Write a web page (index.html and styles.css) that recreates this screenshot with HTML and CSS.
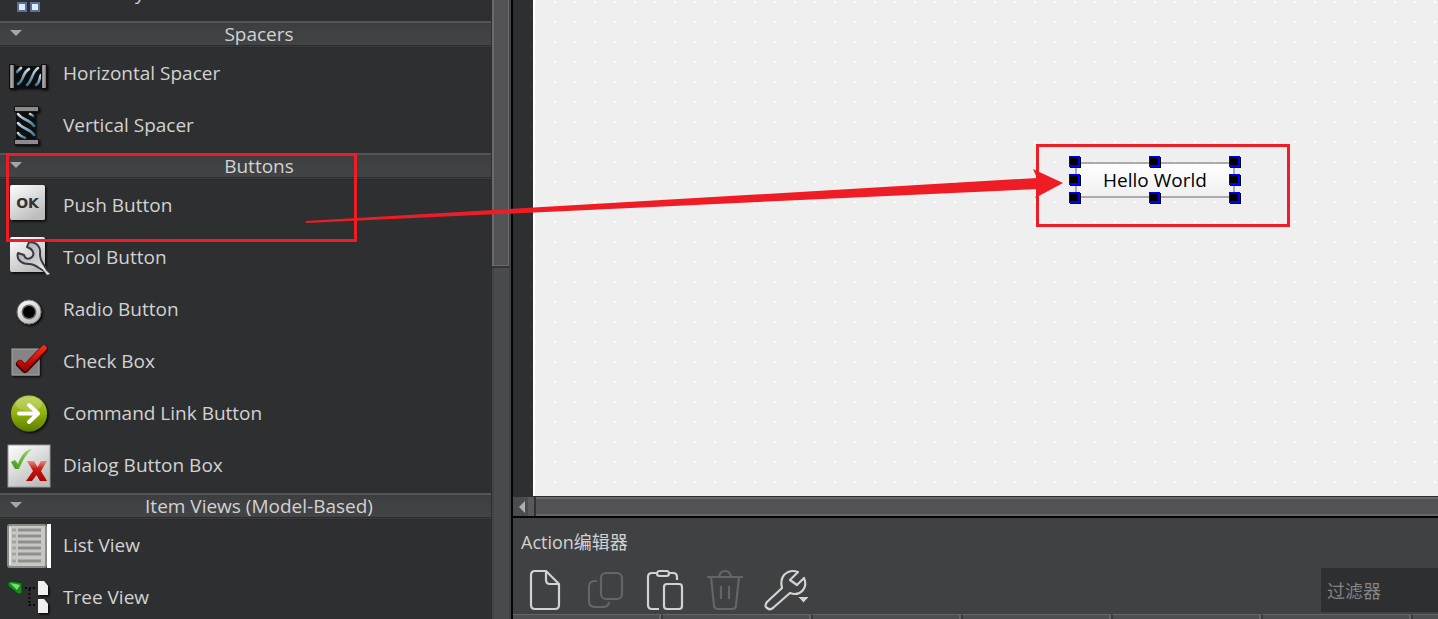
FILE: index.html
```html
<!DOCTYPE html>
<html lang="zh-CN">
<head>
  <meta charset="UTF-8">
  <meta name="viewport" content="width=device-width, initial-scale=1.0">
  <title>Designer</title>
  <link rel="stylesheet" href="styles.css">
</head>
<body>

  <svg class="defs" width="0" height="0" aria-hidden="true">
    <defs>
      <linearGradient id="face" x1="0" y1="0" x2="0.6" y2="1">
        <stop offset="0" stop-color="#fff"/><stop offset="1" stop-color="#bdbdbd"/>
      </linearGradient>
      <linearGradient id="metal" x1="0" y1="0" x2="1" y2="0">
        <stop offset="0" stop-color="#666"/><stop offset="0.4" stop-color="#aaa"/><stop offset="1" stop-color="#666"/>
      </linearGradient>
      <linearGradient id="coil" x1="0" y1="0" x2="0" y2="1">
        <stop offset="0" stop-color="#cbdde8"/><stop offset="1" stop-color="#3b7594"/>
      </linearGradient>
      <linearGradient id="wrench" x1="0" y1="0" x2="1" y2="1">
        <stop offset="0" stop-color="#a5a5ad"/><stop offset="1" stop-color="#e8e8f0"/>
      </linearGradient>
      <linearGradient id="green" x1="0" y1="0" x2="0" y2="1">
        <stop offset="0" stop-color="#b6cc48"/><stop offset="0.5" stop-color="#8db108"/><stop offset="1" stop-color="#5e7d00"/>
      </linearGradient>
      <linearGradient id="leaf" x1="0" y1="1" x2="1" y2="0">
        <stop offset="0" stop-color="#3d9a18"/><stop offset="1" stop-color="#8fe05a"/>
      </linearGradient>
      <linearGradient id="red" x1="0" y1="0" x2="0" y2="1">
        <stop offset="0" stop-color="#ee2a20"/><stop offset="1" stop-color="#a80000"/>
      </linearGradient>
      <linearGradient id="cross" x1="0" y1="0" x2="0" y2="1">
        <stop offset="0" stop-color="#e88a80"/><stop offset="0.4" stop-color="#c41a14"/><stop offset="1" stop-color="#b00000"/>
      </linearGradient>
      <filter id="shadow" x="-30%" y="-30%" width="170%" height="170%">
        <feDropShadow dx="1.5" dy="1.5" stdDeviation="1.3" flood-color="#000" flood-opacity="0.85"/>
      </filter>
    </defs>
  </svg>

  <aside class="widget-box">
    <div class="widget-list">
      <ul>
        <li>
          <svg class="icon" viewBox="0 0 44 44"><g fill="#dcecfa" stroke="#5b6f9b" stroke-width="2"><rect x="11" y="15" width="8" height="8"/><rect x="24" y="15" width="8" height="8"/><rect x="11" y="31" width="8" height="8"/><rect x="24" y="31" width="8" height="8"/></g></svg>
          Form Layout
        </li>
      </ul>

      <button class="group" type="button">Spacers</button>
      <ul>
        <li>
          <svg class="icon" viewBox="0 0 44 44">
            <g filter="url(#shadow)">
              <rect x="7" y="14" width="28" height="22" fill="#0b0d0f"/>
              <g stroke="url(#coil)" stroke-width="2.6" fill="none" stroke-linecap="round"><path d="M10 20l4-4"/><path d="M11 32C17 29 15 21 22 17"/><path d="M20 33C25 29 25 20 31 16"/><path d="M29 33C33 31 32 26 34 23"/></g>
              <rect x="2.5" y="12.5" width="5" height="24" fill="url(#metal)" stroke="#111"/>
              <rect x="34.5" y="12.5" width="5" height="24" fill="url(#metal)" stroke="#111"/>
            </g>
          </svg>
          Horizontal Spacer
        </li>
        <li>
          <svg class="icon" viewBox="0 0 44 44">
            <g filter="url(#shadow)">
              <rect x="9" y="7" width="19" height="30" fill="#0b0d0f"/>
              <g stroke="url(#coil)" stroke-width="2.6" fill="none" stroke-linecap="round"><path d="M23 10l3 2"/><path d="M11 10C15 16 22 15 27 22"/><path d="M11 19C15 25 22 24 27 31"/><path d="M11 29C13 33 15 32 18 34"/></g>
              <rect x="7.5" y="2.5" width="24" height="5" fill="#8c8c8c" stroke="#181818"/>
              <rect x="7.5" y="35.5" width="24" height="5" fill="#8c8c8c" stroke="#181818"/>
            </g>
          </svg>
          Vertical Spacer
        </li>
      </ul>

      <button class="group" type="button">Buttons</button>
      <ul>
        <li>
          <svg class="icon" viewBox="0 0 44 44">
            <rect x="3" y="1" width="35" height="35" rx="2" fill="url(#face)" filter="url(#shadow)"/>
            <text x="20.5" y="24" text-anchor="middle" class="ok">OK</text>
          </svg>
          Push Button
        </li>
        <li>
          <svg class="icon" viewBox="0 0 44 44">
            <rect x="3" y="1" width="35" height="35" rx="2" fill="url(#face)" filter="url(#shadow)"/>
            <path d="M20 11L22 6C30 6 34 11 33 18C33 22 34 25 37 29L42 38L32 32C28 29 26 28 22 28C14 28 9 23 11 17L17 19C18 23 22 24 25 21C28 18 26 13 20 11Z" fill="url(#wrench)" stroke="#3a3a3e" stroke-width="2" stroke-linejoin="round"/>
            <path d="M32 28l11 10-3 1z" fill="#fff" opacity="0.8"/>
          </svg>
          Tool Button
        </li>
        <li>
          <svg class="icon" viewBox="0 0 44 44">
            <circle cx="22" cy="24" r="12" fill="url(#face)" stroke="#777" filter="url(#shadow)"/>
            <circle cx="22" cy="24" r="7.5" fill="#666"/>
            <circle cx="22" cy="24" r="6" fill="#000"/>
          </svg>
          Radio Button
        </li>
        <li>
          <svg class="icon" viewBox="0 0 44 44">
            <rect x="5" y="9" width="27" height="26" fill="#858585" stroke="#a5a5a5" filter="url(#shadow)"/>
            <path d="M13 24L18 29L37 9" fill="none" stroke="#400" stroke-width="8" stroke-linejoin="round" stroke-linecap="round"/>
            <path d="M13 23L18 28L37 8" fill="none" stroke="url(#red)" stroke-width="5.5" stroke-linejoin="round" stroke-linecap="round"/>
          </svg>
          Check Box
        </li>
        <li>
          <svg class="icon" viewBox="0 0 44 44">
            <circle cx="22" cy="21.500" r="18" fill="url(#green)" filter="url(#shadow)"/>
            <ellipse cx="22" cy="12" rx="13" ry="7" fill="#fff" opacity="0.2"/>
            <path d="M12 21.500H31M22 13L31 21.500L22 30" fill="none" stroke="#fff" stroke-width="4" stroke-linecap="round" stroke-linejoin="round"/>
          </svg>
          Command Link Button
        </li>
        <li>
          <svg class="icon" viewBox="0 0 44 44">
            <rect x="1" y="1" width="42" height="42" fill="url(#face)" stroke="#999"/>
            <path d="M4 18L8 16L11 20C14 12 18 6 25 5C19 10 15 18 12 25H8Z" fill="url(#leaf)"/>
            <path d="M20 17H27L30.500 23L34 17H40L34 27L40 37H33L29.500 31L25 37H19L26 27Z" fill="url(#cross)"/>
          </svg>
          Dialog Button Box
        </li>
      </ul>

      <button class="group" type="button">Item Views (Model-Based)</button>
      <ul>
        <li>
          <svg class="icon" viewBox="0 0 44 44">
            <rect x="40" y="0" width="4" height="44" fill="#fff"/>
            <rect x="1" y="1" width="38" height="42" rx="2" fill="#c7c7c4" stroke="#8a8a88" stroke-width="2"/>
            <path d="M11 6H34M11 12H34M11 18H34M11 24H34M11 30H34M11 37H34" stroke="#8f8f8c" stroke-width="3"/>
            <path d="M5 6H9M5 12H9M5 18H9M5 24H9M5 30H9M5 37H9" stroke="#a5a5a2" stroke-width="3"/>
            <path d="M3 3V41" stroke="#e4e4e2" stroke-width="2"/>
          </svg>
          List View
        </li>
        <li>
          <svg class="icon" viewBox="0 0 44 44">
            <path d="M1 6L5 5L15 7V18H11L1 10Z" fill="#178a1a" stroke="#073c09"/>
            <path d="M3 7L9 8L13 9L10 14Z" fill="#7ed77b"/>
            <path d="M18 12H29M22.500 13V30M22 29H29" fill="none" stroke="#090909" stroke-width="2" stroke-dasharray="2 2"/>
            <g fill="#f0f0f0" filter="url(#shadow)"><path d="M31 5H37L41 10V19H31Z"/><path d="M31 23H37L41 28V37H31Z"/></g>
          </svg>
          Tree View
        </li>
      </ul>
    </div>
    <div class="vscroll"><div class="thumb"></div></div>
  </aside>

  <main>
    <div class="workspace">
      <div class="form-canvas">
        <div class="widget">
          <button class="push" type="button">Hello World</button>
          <i class="handle top left"></i>
          <i class="handle top center"></i>
          <i class="handle top right"></i>
          <i class="handle middle left"></i>
          <i class="handle middle right"></i>
          <i class="handle bottom left"></i>
          <i class="handle bottom center"></i>
          <i class="handle bottom right"></i>
        </div>
      </div>
    </div>

    <div class="hscroll">
      <button type="button" aria-label="Scroll left"><svg width="6" height="12" viewBox="0 0 6 12"><path d="M6 0V12L0 6Z" fill="#b0b0b0"/></svg></button>
      <div class="track"></div>
    </div>

    <section class="action-editor">
      <h2>Action编辑器</h2>
      <div class="toolbar">
        <div class="tools">
          <button type="button" aria-label="New">
            <svg viewBox="0 0 40 44"><path d="M10 3H21L34 16V37Q34 41 30 41H10Q6 41 6 37V7Q6 3 10 3ZM21 3V12Q21 16 25 16H34"/></svg>
          </button>
          <button type="button" aria-label="Copy" disabled>
            <svg viewBox="0 0 40 44"><rect x="16" y="5" width="21" height="26" rx="5"/><path d="M12 13H10Q4 13 4 19V33Q4 39 10 39H17Q24 39 24 34"/></svg>
          </button>
          <button type="button" aria-label="Paste">
            <svg viewBox="0 0 40 44"><path d="M11 5H7Q3 5 3 9V37Q3 41 7 41H14M24 5H28Q32 5 32 9V12"/><rect x="12" y="3" width="12" height="5" rx="2.500"/><rect x="19" y="16" width="18" height="25" rx="3"/></svg>
          </button>
          <button type="button" aria-label="Delete" disabled>
            <svg viewBox="0 0 40 44"><path d="M2 9H38M6 9L9 37Q9 41 13 41H27Q31 41 31 37L34 9M14 9Q15 3 20 3Q25 3 26 9M16 18V31M24 18V31"/></svg>
          </button>
          <button class="config" type="button" aria-label="Configure">
            <svg viewBox="0 0 44 44"><path d="M33 4Q25 1 19 7Q15 12 17 20L2 34Q-1 38 2 40Q6 43 9 39L25 25Q33 28 38 22Q42 17 39 10L32 17L25 12Z"/><path class="menu-arrow" d="M32.500 28.500H44.500L38.500 35Z"/></svg>
          </button>
        </div>
        <input class="filter" type="text" placeholder="过滤器" aria-label="过滤器">
      </div>
      <div class="columns"><span></span><span></span><span></span><span></span><span></span><span></span><span></span></div>
    </section>
  </main>

  <!-- drag annotation -->
  <div class="mark source"></div>
  <div class="mark target"></div>
  <svg class="arrow" width="760" height="60" viewBox="0 0 760 60"><path d="M1 56L732 13L728 4L758 18L730 33L734 24L1 58Z" fill="#ee1d25"/></svg>

</body>
</html>
```
FILE: styles.css
```css
* {
  box-sizing: border-box;
}

body {
  margin: 0;
  height: 100vh;
  display: flex;
  overflow: hidden;
  position: relative;
  background: #404142;
  color: #d2d2d2;
  font-family: "Open Sans", "Noto Sans CJK SC", sans-serif;
  font-size: 19px;
}

button, input {
  font: inherit;
  color: inherit;
  border: none;
  border-radius: 0;
  padding: 0;
}

.defs {
  position: absolute;
}

/* widget box */
.widget-box {
  flex: none;
  width: 513px;
  display: flex;
  background: #2e2f30;
  border-right: 2px solid #050506;
  overflow: hidden;
}

.widget-list {
  flex: 1;
  margin-top: -32px;
}

.widget-list ul {
  list-style: none;
  margin: 0;
  padding: 0;
}

.widget-list li {
  display: flex;
  gap: 12px;
  height: 52px;
  padding: 0 7px;
  line-height: 50px;
}

.icon {
  flex: none;
  width: 44px;
  height: 44px;
  margin-top: 4px;
}

.ok {
  font: bold 14px "DejaVu Sans", sans-serif;
  fill: #333;
}

.group {
  display: block;
  position: relative;
  width: 100%;
  height: 27px;
  margin-top: 1px;
  padding-left: 27px;
  line-height: 22px;
  text-align: center;
  background: linear-gradient(#3d3e40, #434446);
  border-top: 2px solid #535456;
  border-bottom: 3px double #292a2b;
}

.group::before {
  content: "";
  position: absolute;
  left: 10px;
  top: 7px;
  border: 6px solid transparent;
  border-top-color: #a5a5a5;
  border-bottom: none;
}

.vscroll {
  flex: none;
  width: 19px;
  margin-left: 1px;
  background: #4a4b4d;
  border-left: 2px solid #434446;
  border-right: 2px solid #414244;
}

.vscroll .thumb {
  height: 43vh;
  margin-left: -2px;
  background: #525254;
  border: 1px solid #6b6b6d;
  border-left-width: 2px;
  border-top: none;
  box-shadow: 0 2px #333436;
}

/* form */
main {
  flex: 1;
  min-width: 0;
  display: flex;
  flex-direction: column;
}

.workspace {
  flex: 1;
  display: flex;
  padding-left: 20px;
  background: #2e2f30;
}

.form-canvas {
  flex: 1;
  position: relative;
  border-left: 2px solid #fff;
  background-color: #efefef;
  background-image: conic-gradient(from 270deg at 2px 2px, #fff 90deg, transparent 0);
  background-size: 20px 20px;
  background-position: -1px 1px;
}

.widget {
  position: absolute;
  left: 540px;
  top: 162px;
  width: 160px;
  height: 36px;
}

.push {
  width: 100%;
  height: 100%;
  border: 2px solid #ababab;
  background: linear-gradient(#fff, #f0f0f0);
  color: #000;
}

.handle {
  position: absolute;
  width: 11px;
  height: 11px;
  background: #000;
  border: 1px solid #00f;
  border-right-width: 2px;
  border-bottom-width: 2px;
  box-shadow: 1px 1px #000;
}

.handle.top { top: -6px; }
.handle.middle { top: 12px; }
.handle.bottom { bottom: -5px; }
.handle.left { left: -6px; }
.handle.center { left: 74px; }
.handle.right { right: -5px; }

.hscroll {
  flex: none;
  display: flex;
  height: 22px;
  border-top: 1px solid #2e2f30;
  border-bottom: 2px solid #050506;
}

.hscroll button {
  display: flex;
  align-items: center;
  width: 23px;
  padding-left: 6px;
  background: #4b4c4e;
  border-right: 2px solid #303133;
  box-shadow: inset -6px 0 #58595b;
}

.hscroll .track {
  flex: 1;
  background: #525254;
  border-top: 2px solid #68686a;
  border-bottom: 2px solid #68686a;
}

/* action editor */
.action-editor {
  flex: none;
  padding-top: 11px;
}

.action-editor h2 {
  margin: 0 8px;
  font-size: 18px;
  font-weight: normal;
  line-height: 26px;
}

.toolbar {
  display: flex;
  justify-content: space-between;
  align-items: center;
  height: 44px;
  margin-top: 13px;
}

.tools {
  display: flex;
  gap: 20px;
  padding-left: 12px;
}

.tools button {
  width: 40px;
  height: 44px;
  background: none;
}

.tools .config {
  width: 44px;
}

.tools svg {
  display: block;
  width: 100%;
  height: 44px;
  fill: none;
  stroke: #d2d2d2;
  stroke-width: 2.2;
  stroke-linejoin: round;
  overflow: visible;
}

.tools button:disabled svg {
  stroke: #646567;
}

.tools .menu-arrow {
  fill: #d2d2d2;
  stroke: #404142;
  stroke-width: 1;
}

.filter {
  width: 117px;
  height: 44px;
  padding: 2px 0 0 6px;
  background: #2e2f30;
  font-size: 18px;
}

.filter::placeholder {
  color: #828384;
}

.columns {
  display: flex;
  height: 5px;
  margin-top: 2px;
  overflow: hidden;
}

.columns span {
  flex: none;
  width: 150px;
  background: #4e4f51;
  border-top: 1px solid #656668;
  border-right: 2px solid #656668;
  border-left: 2px solid #38393b;
}

.columns span:first-child {
  width: 148px;
  border-left: none;
}

/* annotation over the window */
.mark {
  position: absolute;
  border: 3px solid #ee1d25;
}

.mark.source {
  left: 6px;
  top: 153px;
  width: 351px;
  height: 89px;
}

.mark.target {
  left: 1036px;
  top: 144px;
  width: 254px;
  height: 83px;
}

.arrow {
  position: absolute;
  left: 305px;
  top: 165px;
}
```
